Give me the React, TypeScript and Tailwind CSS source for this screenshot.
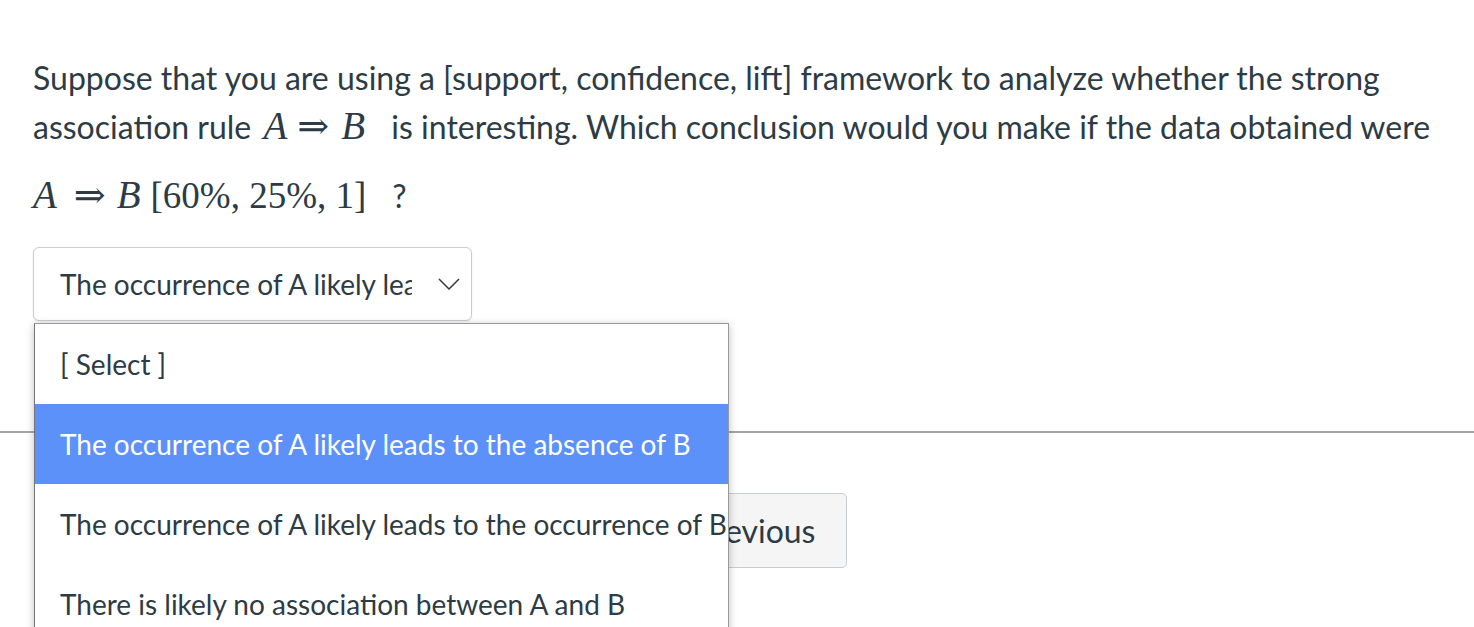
import React from "react";

const lato = { fontFamily: "Lato, 'Noto Sans', sans-serif" };
const serif = { fontFamily: "'Liberation Serif', 'DejaVu Serif', serif" };

// A ⇒ B, set in a serif face like the math renderer does
function Rule({ className = "", gap = "ml-[10px] mr-[12px]" }: { className?: string; gap?: string }) {
  return (
    <span className={"leading-none " + className} style={serif}>
      <i className="text-[39px]">A</i>
      <span className={gap + " text-[38px]"}>⇒</span>
      <i className="text-[39px] pr-[4px]">B</i>
    </span>
  );
}

const options = [
  "[ Select ]",
  "The occurrence of A likely leads to the absence of B",
  "The occurrence of A likely leads to the occurrence of B",
  "There is likely no association between A and B",
];

export default function App() {
  return (
    <div className="min-h-screen bg-white text-[#2d3b45] overflow-hidden" style={lato}>
      <div className="pl-[33px] pt-[53px]">
        <p className="text-[32px] leading-[49px]">
          Suppose that you are using a [support, confidence, lift] framework to analyze whether the strong
          association rule <Rule className="ml-[4px] mr-[6px]" /> &nbsp;is interesting. Which conclusion would you make if the data obtained were
        </p>
        <p className="mt-[24px] h-[48px] leading-[48px]">
          <Rule gap="ml-[17px] mr-[11px]" />
          <span className="ml-[6px] text-[37px] leading-none" style={serif}>
            [60%, 25%, 1]
          </span>
          <span className="ml-[26px] text-[32px] leading-none">?</span>
        </p>

        <div className="relative mt-[24px] w-[439px]">
          <div className="flex h-[74px] items-center rounded-[6px] border border-[#c7cdd1] bg-white pl-[26px] text-[28px] shadow-[0_1px_2px_rgba(0,0,0,0.08)]">
            <span className="w-[352px] overflow-hidden whitespace-nowrap">
              The occurrence of A likely leads to the absence of B
            </span>
            <svg className="ml-[26px]" width="22" height="12" viewBox="0 0 22 12" fill="none" stroke="#2d3b45" strokeWidth="1.5">
              <path d="M1 1 L11 11 L21 1" />
            </svg>
          </div>

          <ul className="absolute left-[1px] top-[76px] z-10 w-[695px] overflow-hidden border border-[#9a9a9a] border-l-[#767676] bg-white shadow-[0_2px_8px_rgba(0,0,0,0.25)]">
            {options.map((o, i) => (
              <li
                key={o}
                className={
                  "flex h-[80px] items-center pl-[25px] text-[28px] whitespace-nowrap " +
                  (i === 1 ? "bg-[#5b91f8] text-white" : "text-[#2d3b45]")
                }
              >
                {o}
              </li>
            ))}
          </ul>
        </div>
      </div>

      <hr className="mt-[110px] border-0 border-t-2 border-[#a5a5a5]" />

      <div className="mt-[60px] pl-[664px]">
        <button className="h-[75px] w-[183px] rounded-[5px] border border-[#c7cdd1] bg-[#f5f5f5] pl-[30px] text-left text-[32px] text-[#2d3b45]">
          Previous
        </button>
      </div>
    </div>
  );
}
